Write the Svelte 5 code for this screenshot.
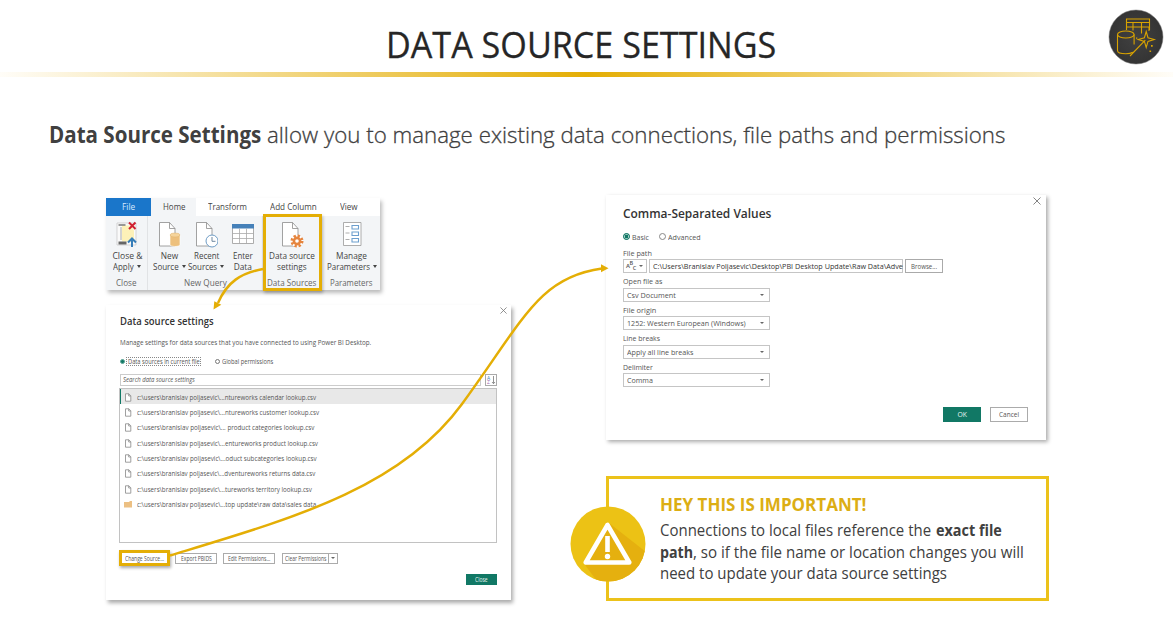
<script>
  // Condenses a run of text horizontally so that it fills the given width.
  function fit(node, width) {
    const natural = node.offsetWidth;
    node.style.width = width + 'px';
    node.style.transform = `scaleX(${width / natural})`;
  }

  const tabs = [
    ['File', 13, 45, 'file'],
    ['Home', 22, 45, 'home'],
    ['Transform', 38.5, 62, ''],
    ['Add Column', 47, 71, ''],
    ['View', 17.5, 39, '']
  ];

  const sources = [
    ['c:\\users\\branislav poljasevic\\...ntureworks calendar lookup.csv', 179.5],
    ['c:\\users\\branislav poljasevic\\...ntureworks customer lookup.csv', 182],
    ['c:\\users\\branislav poljasevic\\... product categories lookup.csv', 177],
    ['c:\\users\\branislav poljasevic\\...entureworks product lookup.csv', 181],
    ['c:\\users\\branislav poljasevic\\...oduct subcategories lookup.csv', 179.5],
    ['c:\\users\\branislav poljasevic\\...dventureworks returns data.csv', 178],
    ['c:\\users\\branislav poljasevic\\...tureworks territory lookup.csv', 174.5],
    ['c:\\users\\branislav poljasevic\\...top update\\raw data\\sales data', 179]
  ];

  const fields = [
    ['Open file as', 39.5, 'Csv Document', 49],
    ['File origin', 33, '1252: Western European (Windows)', 119],
    ['Line breaks', 37.5, 'Apply all line breaks', 67],
    ['Delimiter', 30, 'Comma', 26]
  ];
</script>

{#snippet t(text, width)}<span class="fit" use:fit={width}>{text}</span>{/snippet}

{#snippet caret()}<i class="caret"></i>{/snippet}

{#snippet cross(size)}
  <svg class="cross" width={size} height={size} viewBox="0 0 8 8"><path d="M.5.5l7 7M7.500.5l-7 7" /></svg>
{/snippet}

{#snippet page()}
  <path d="M2.500 1.500h10l5.500 6v17.500h-15.500z" fill="#fff" stroke="#8b8b8b" stroke-width=".8" />
  <path d="M12.500 1.500v6h5.500" fill="none" stroke="#8b8b8b" stroke-width=".8" />
{/snippet}

<main>
  <header>
    <h1>{@render t('DATA SOURCE SETTINGS', 390)}</h1>
    <svg class="logo" width="56" height="56" viewBox="0 0 56 56">
      <defs>
        <radialGradient id="disc"><stop offset="0" stop-color="#414141" /><stop offset="1" stop-color="#343434" /></radialGradient>
      </defs>
      <circle cx="28" cy="28" r="27" fill="url(#disc)" stroke="#777" stroke-width=".5" />
      <g fill="none" stroke="#d9a300" stroke-width="1.100">
        <path d="M18.500 21V10h23v11M18.500 13.500h23M18.500 18h23M25 13.500v8M33.500 13.500v11M41 18v4" />
        <ellipse cx="17.800" cy="25.500" rx="8.300" ry="3.500" />
        <path d="M9.500 25.500v16c0 2 3.600 3.300 8.300 3.300 3 0 5.500-.5 7-1.500M26.100 25.500v10" />
        <path d="M22 47L37.300 31.200M38.200 22.500l1.800 6.200 6.200 1.800-6.200 1.900-1.800 6.100-1.800-6.100-6.200-1.900 6.200-1.800z" />
      </g>
      <path d="M43 36h1.700v1.700H43zM41.500 41.500h1.600v1.600h-1.600zM28 28.500h1.300v1.300H28z" fill="#d9a300" />
    </svg>
  </header>
  <div class="rule"></div>

  <p class="lead"><b>{@render t('Data Source Settings', 212)}</b>{@render t('allow you to manage existing data connections, file paths and permissions', 738.5)}</p>

  <div class="columns">
    <div class="left">
      <section class="ribbon">
        <nav>
          {#each tabs as [label, width, cell, kind]}
            <div class="tab {kind}" style:width="{cell}px">{@render t(label, width)}</div>
          {/each}
        </nav>
        <div class="groups">
          <div class="group g-close">
            <div class="tools">
              <div class="tool">
                <svg width="24" height="28" viewBox="0 0 24 28">
                  <path d="M2 2h19v22H2z" fill="#fafafa" stroke="#c4c4c4" stroke-width=".7" />
                  <path d="M7 4.500h9l3 5v11H7z" fill="#fdf1b8" />
                  <path d="M3.500 4h7" fill="none" stroke="#777" stroke-width="1.500" />
                  <path d="M6 6v13" fill="none" stroke="#aaa" />
                  <path d="M3.500 20.500h8v3h-8z" fill="#666" />
                  <path d="M14 1.500l6.500 6.500M20.500 1.500l-6.500 6.500" stroke="#cf2030" stroke-width="2" />
                  <path d="M17 26v-8M13 21.500l4-4 4 4" fill="none" stroke="#377eb9" stroke-width="2" />
                </svg>
                <div>{@render t('Close &', 30)}</div>
                <div>{@render t('Apply', 21)}{@render caret()}</div>
              </div>
            </div>
            <div class="caption">{@render t('Close', 20.5)}</div>
          </div>
          <div class="group g-query">
            <div class="tools">
              <div class="tool">
                <svg width="24" height="28" viewBox="0 0 24 28">
                  {@render page()}
                  <path d="M13 14v9.500c0 1.200 2.200 2 5 2s5-.8 5-2V14z" fill="#edc07d" stroke="#fff" stroke-width=".6" />
                  <ellipse cx="18" cy="14" rx="5" ry="2" fill="#f5d49c" stroke="#deb06a" stroke-width=".5" />
                </svg>
                <div>{@render t('New', 17)}</div>
                <div>{@render t('Source', 26)}{@render caret()}</div>
              </div>
              <div class="tool">
                <svg width="24" height="28" viewBox="0 0 24 28">
                  {@render page()}
                  <circle cx="18" cy="20" r="6" fill="#fff" stroke="#6e9cc5" stroke-width="1" />
                  <path d="M18 16v4.300h3.500" fill="none" stroke="#6e87a0" />
                </svg>
                <div>{@render t('Recent', 25)}</div>
                <div>{@render t('Sources', 29.5)}{@render caret()}</div>
              </div>
              <div class="tool">
                <svg width="24" height="28" viewBox="0 0 24 28">
                  <path d="M1.500 3.500h21v19h-21z" fill="#fff" stroke="#999" stroke-width=".8" />
                  <path d="M1 3h22v4.500H1z" fill="#4681b9" />
                  <path d="M1.500 12.500h21M1.500 17.500h21M8.500 7.500v15M15.500 7.500v15" stroke="#aaa" stroke-width=".8" />
                </svg>
                <div>{@render t('Enter', 20)}</div>
                <div>{@render t('Data', 18)}</div>
              </div>
            </div>
            <div class="caption">{@render t('New Query', 42.5)}</div>
          </div>
          <div class="group g-sources">
            <div class="tools">
              <div class="tool">
                <svg width="24" height="28" viewBox="0 0 24 28">
                  {@render page()}
                  <circle cx="17" cy="20" r="6" fill="#fff" />
                  <circle cx="17" cy="20" r="5.200" fill="none" stroke="#e5853f" stroke-width="2.600" stroke-dasharray="2.300 1.784" />
                  <circle cx="17" cy="20" r="3.100" fill="#fff" stroke="#e5853f" stroke-width="2.600" />
                </svg>
                <div>{@render t('Data source', 45.5)}</div>
                <div>{@render t('settings', 29.5)}</div>
              </div>
            </div>
            <div class="caption">{@render t('Data Sources', 49.5)}</div>
          </div>
          <div class="group g-params">
            <div class="tools">
              <div class="tool">
                <svg width="24" height="28" viewBox="0 0 24 28">
                  <path d="M3.500 1.500h17.500v23H3.500z" fill="#fff" stroke="#999" stroke-width=".8" />
                  <path d="M5.500 5.500h4M5.500 12h4M5.500 18.500h4" stroke="#999" stroke-width=".8" />
                  <path d="M12 4.500h6.500v3.500H12zM12 11h6.500v3.500H12zM12 17.500h6.500V21H12z" fill="#fff" stroke="#6d9fce" stroke-width="1.100" />
                </svg>
                <div>{@render t('Manage', 31)}</div>
                <div>{@render t('Parameters', 43)}{@render caret()}</div>
              </div>
            </div>
            <div class="caption">{@render t('Parameters', 42.5)}</div>
          </div>
        </div>
      </section>

      <section class="sources">
        <div class="closer">{@render cross(7)}</div>
        <h2>{@render t('Data source settings', 94)}</h2>
        <p>{@render t('Manage settings for data sources that you have connected to using Power BI Desktop.', 251)}</p>
        <div class="radios">
          <i class="radio on"></i><span class="dotted">{@render t('Data sources in current file', 72)}</span>
          <i class="radio second"></i>{@render t('Global permissions', 51)}
        </div>
        <div class="search">
          <div class="input"><em>{@render t('Search data source settings', 72)}</em></div>
          <div class="sort">
            <svg width="10" height="10" viewBox="0 0 10 10">
              <text x="1" y="4.600" font-size="5" fill="#3f82b5">A</text>
              <text x="1" y="9.300" font-size="5" fill="#9a62ae">Z</text>
              <path d="M7.500 1v7.500M6 7l1.500 1.700L9 7" fill="none" stroke="#777" stroke-width=".8" />
            </svg>
          </div>
        </div>
        <ul>
          {#each sources as [path, width], i}
            <li class:selected={i === 0}>
              {#if i < sources.length - 1}
                <svg width="8" height="9" viewBox="0 0 8 9"><path d="M1.500.8h3.400l1.900 2v5.400H1.500zM4.700.8V3h2" fill="#fff" stroke="#888" stroke-width=".8" /></svg>
              {:else}
                <svg width="8" height="9" viewBox="0 0 8 9"><path d="M0 2h5l1-1h2v6.500H0z" fill="#ecc083" /></svg>
              {/if}
              {@render t(path, width)}
            </li>
          {/each}
        </ul>
        <div class="actions">
          <div class="button change">{@render t('Change Source...', 39)}</div>
          <div class="button export">{@render t('Export PBIDS', 31)}</div>
          <div class="button edit">{@render t('Edit Permissions...', 42)}</div>
          <div class="button clear">{@render t('Clear Permissions', 41)}<div class="drop">{@render caret()}</div></div>
        </div>
        <div class="done"><div class="button green">{@render t('Close', 13)}</div></div>
      </section>
    </div>

    <div class="right">
      <section class="csv">
        <div class="closer">{@render cross(8)}</div>
        <h2>{@render t('Comma-Separated Values', 148.5)}</h2>
        <div class="radios">
          <i class="radio on"></i>{@render t('Basic', 17)}
          <i class="radio second"></i>{@render t('Advanced', 33)}
        </div>
        <div class="label">{@render t('File path', 28.5)}</div>
        <div class="path">
          <div class="box type"><span>A<sup>B</sup><sub>C</sub></span>{@render caret()}</div>
          <div class="box value">{@render t('C:\\Users\\Branislav Poljasevic\\Desktop\\PBI Desktop Update\\Raw Data\\Adve', 249.5)}</div>
          <div class="box browse">{@render t('Browse...', 26)}</div>
        </div>
        {#each fields as [label, labelWidth, value, valueWidth]}
          <div class="label">{@render t(label, labelWidth)}</div>
          <div class="box select">{@render t(value, valueWidth)}{@render caret()}</div>
        {/each}
        <div class="confirm">
          <div class="button green">{@render t('OK', 9)}</div>
          <div class="button">{@render t('Cancel', 20)}</div>
        </div>
      </section>

      <aside>
        <svg class="warning" width="76" height="76" viewBox="0 0 76 76">
          <defs><clipPath id="round"><circle cx="38" cy="38" r="37.500" /></clipPath></defs>
          <circle cx="38" cy="38" r="37.500" fill="#ecc215" />
          <path d="M39 17L90 57 70 90H38L14 57.500z" fill="#e5b00f" clip-path="url(#round)" />
          <path d="M37.500 19L15.700 56.500h43.600z" fill="none" stroke="#fff" stroke-width="4.600" stroke-linejoin="round" />
          <path d="M37.500 30v16" stroke="#fff" stroke-width="4.600" />
          <circle cx="37.500" cy="50.500" r="2.700" fill="#fff" />
        </svg>
        <h3>{@render t('HEY THIS IS IMPORTANT!', 206)}</h3>
        <p>{@render t('Connections to local files reference the', 271.5)}<b class="gap">{@render t('exact file', 66)}</b></p>
        <p><b>{@render t('path', 33)}</b>{@render t(', so if the file name or location changes you will', 331)}</p>
        <p>{@render t('need to update your data source settings', 287)}</p>
      </aside>
    </div>
  </div>

  <svg class="arrows" width="1173" height="627" viewBox="0 0 1173 627">
    <g fill="none" stroke="#e4ae05" stroke-width="2.500">
      <path d="M263 269C241 273 227 282 218 303" />
      <path d="M170 555.500C290 519 400 489 462 404S539 277 602 268.500" />
    </g>
    <path d="M213.500 309.500l.8-8.300 7 3.500zM608.500 268.300l-7.500 4v-8z" fill="#e4ae05" />
  </svg>
</main>

<style>
  :global(body) { margin: 0; background: #fff; }
  main { position: relative; width: 1173px; height: 627px; overflow: hidden; color: #404040; font-family: 'Open Sans', sans-serif; }
  main :global(*) { box-sizing: border-box; }
  h1, h2, h3, p, ul { margin: 0; padding: 0; }
  .fit { display: inline-block; flex: none; white-space: pre; transform-origin: 0 50%; }

  header { height: 72px; display: grid; grid-template-columns: 385.500px 390px 1fr; }
  h1 { grid-column: 2; padding-top: 16px; font: 400 36.500px/56px 'Open Sans', sans-serif; color: #262626; -webkit-text-stroke: .3px #262626; }
  .logo { justify-self: end; margin: 9px 9px 0 0; }
  .rule { height: 5px; background: linear-gradient(90deg, #fffdf8, #e4ae05 50%, #fffdf8); }
  .lead { display: flex; gap: 6px; height: 118px; padding: 41px 0 0 49px; font-size: 22.500px; line-height: 34px; font-weight: 300; -webkit-text-stroke: .3px #404040; }
  .lead b { font-weight: 700; -webkit-text-stroke: 0; }

  .columns { display: grid; grid-template-columns: 405px 443px; gap: 95px; padding-left: 106px; }
  section { background: #fff; }

  .ribbon { width: 274px; height: 92px; margin-top: 3px; font-size: 8.300px; color: #444; box-shadow: 2px 3px 4px #0004; }
  nav { display: flex; height: 18px; line-height: 18px; }
  .tab { text-align: center; }
  .file { background: #1a76ca; color: #d8eaff; }
  .home { background: #f3f5f7; }
  .groups { display: grid; grid-template-columns: 42px 115px 61px 56px; height: 74px; background: #f3f5f7; }
  .group { border-right: 1px solid #e1e3e5; height: 74px; }
  .g-params { border: 0; }
  .g-params .tools, .g-params .caption { margin-left: -1px; }
  .tools { display: flex; height: 58.500px; padding-top: 5px; }
  .g-query .tools { padding: 5px 1px 0 3px; }
  .tool { flex: 1; text-align: center; line-height: 11px; white-space: nowrap; }
  .tool svg { display: block; margin: 0 auto 1px; }
  .caption { height: 15px; line-height: 16px; text-align: center; color: #666; }
  .g-sources { height: 77px; margin: -2px 2px 0 0; padding: 2px 1px 0 0; border: 0; outline: 3px solid #e4ae05; outline-offset: -3px; box-shadow: 1px 2px 3px #0004; }
  .caret { display: inline-block; flex: none; width: 0; height: 0; border: 2px solid transparent; border-top: 3px solid #444; border-bottom: 0; margin-left: 3px; vertical-align: 2px; }

  .sources { margin-top: 15px; height: 295px; padding: 0 14px; font-size: 6.200px; color: #555; box-shadow: 2px 3px 4px #0005; }
  .closer { display: flex; justify-content: flex-end; }
  .cross { display: block; fill: none; stroke: #777; stroke-width: .9; }
  .sources .closer { height: 8px; padding-top: 2px; margin-right: -10px; }
  .sources h2 { font-size: 10px; line-height: 16px; font-weight: 600; color: #333; }
  .sources p { font-size: 6.400px; line-height: 10px; margin-top: 9px; }
  .radios { display: flex; align-items: center; }
  .sources .radios { height: 10px; margin-top: 8px; }
  .radio { flex: none; width: 5px; height: 5px; border: 1px solid #777; border-radius: 50%; }
  .on { background: #117865; border-color: #5aa596; }
  .dotted { display: flex; height: 9px; line-height: 8px; margin-left: 1px; padding-left: 1px; width: 75px; border: 1px dotted #888; }
  .sources .second { margin: 0 2px 0 14px; }
  .search { display: flex; gap: 4px; margin-top: 8px; height: 12px; line-height: 10px; }
  .input { width: 361px; border: 1px solid #ccc; padding-left: 2px; }
  .sort { width: 12px; border: 1px solid #aaa; }
  .sort svg { display: block; }
  ul { width: 378px; height: 155px; margin: 2px 0 0 -1px; border: 1px solid #c2c2c2; list-style: none; }
  li { display: flex; align-items: center; gap: 5px; height: 15.300px; padding: 1.200px 0 0 4px; font-size: 6.500px; }
  .selected { background: #e8e8e8; border-left: 1.500px solid #117865; padding-left: 3px; }
  .actions { display: flex; align-items: center; height: 16px; margin: 7px 0 0 -1px; }
  .button { display: flex; align-items: center; justify-content: center; border: 1px solid #ababab; height: 11px; color: #555; }
  .change { width: 51px; height: 16px; border: 3px solid #e4ae05; box-shadow: 1px 2px 3px #0005; }
  .export { width: 42px; margin-left: 5px; }
  .edit { width: 52px; margin-left: 6px; }
  .clear { width: 56px; margin-left: 7px; }
  .drop { display: flex; align-items: center; height: 9px; width: 8px; margin-left: 2px; border-left: 1px solid #ababab; }
  .sources .caret, .csv .caret { border-width: 2.500px 2px 0; border-top-color: #666; }
  .drop .caret { margin-left: 2px; }
  .done { display: flex; justify-content: flex-end; margin-top: 8px; }
  .done .button { width: 31px; }
  .button.green { background: #117865; border-color: #117865; color: #e5f3f0; }

  .csv { width: 440px; height: 245px; padding: 0 17px; font-size: 7.400px; color: #555; box-shadow: 2px 2px 4px #0005; }
  .csv .closer { height: 9px; padding-top: 2px; margin-right: -12px; }
  .csv h2 { font-size: 12.300px; line-height: 20px; font-weight: 600; color: #333; }
  .csv .radios { height: 12px; margin-top: 7px; }
  .csv .radio { width: 7px; height: 7px; margin-right: 2px; border-color: #888; margin-top: -2px; }
  .csv .on { border-color: #117865; background: #117865; box-shadow: inset 0 0 0 .6px #fff; }
  .csv .second { margin-left: 10px; }
  .label { height: 14.500px; line-height: 16.500px; }
  .radios + .label { height: 16px; line-height: 20px; }
  .path { display: flex; gap: 2px; }
  .box { height: 14px; display: flex; align-items: center; border: 1px solid #c5c5c5; }
  .type { width: 24px; padding: 0 3px 0 2px; justify-content: space-between; font-size: 6px; font-weight: 600; }
  .type .caret { margin-left: 0; }
  .type span { line-height: 8px; letter-spacing: -.4px; }
  .type sup, .type sub { font-size: 5.500px; line-height: 0; }
  .value { width: 254px; padding-left: 3px; color: #333; }
  .browse { width: 38px; justify-content: center; font-size: 6.600px; border-color: #aaa; }
  .select { width: 147px; padding: 0 5px 0 3px; justify-content: space-between; }
  .confirm { display: flex; justify-content: flex-end; gap: 9px; margin: 20px 1px 0 0; font-size: 6.800px; }
  .confirm .button { width: 38px; height: 15px; }

  aside { position: relative; width: 443px; height: 125px; margin-top: 36px; padding: 14px 0 0 51px; border: 3px solid #ecc21a; font-size: 15.500px; line-height: 21.500px; }
  .warning { position: absolute; left: -39.500px; top: 27px; }
  h3 { font-size: 17px; line-height: 24px; margin-bottom: 3px; color: #dcae14; }
  aside p { display: flex; }
  .gap { margin-left: 4.500px; }
  .arrows { position: absolute; left: 0; top: 0; }
</style>
